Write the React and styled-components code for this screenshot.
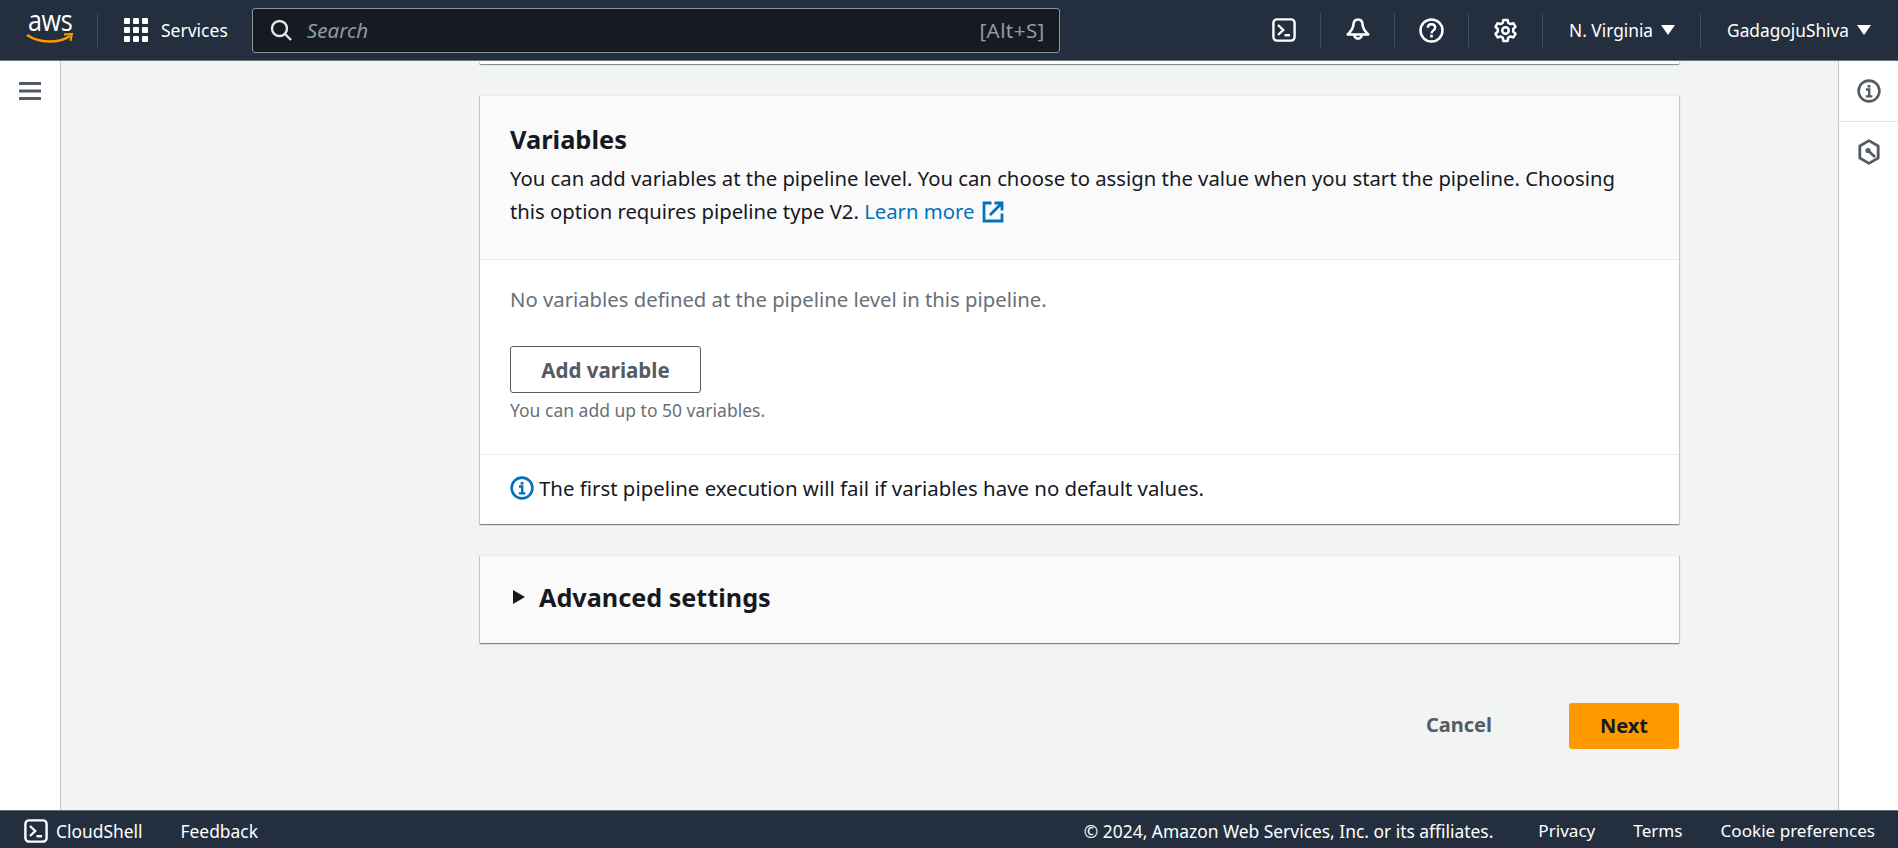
import React from 'react';
import styled, { createGlobalStyle } from 'styled-components';

const GlobalStyle = createGlobalStyle`
  html, body { margin: 0; padding: 0; height: 100%; overflow: hidden; }
  body { font-family: "Noto Sans", "Open Sans", sans-serif; color: #16191f; }
  #root { height: 100%; }
`

// page frame
const Page = styled.div`
  height: 848px;
  display: flex;
  flex-direction: column;
  background: #f2f3f3;
`
const TopBar = styled.header`
  height: 60px;
  flex: none;
  display: flex;
  align-items: center;
  background: #232f3e;
  border-bottom: 1px solid #6b7680;
  color: #fff;
`
const Middle = styled.div`
  flex: 1;
  min-height: 0;
  display: flex;
`
const SideRail = styled.aside`
  width: 61px;
  flex: none;
  background: #fff;
  border-right: 1px solid #c2c7cb;
  display: flex;
  justify-content: center;
  padding-top: 21px;
  box-sizing: border-box;
`
const Main = styled.main`
  flex: 1;
  min-width: 0;
  overflow: hidden;
  padding: 0 159px 0 419px;
`
const ToolRail = styled.aside`
  width: 60px;
  flex: none;
  background: #fff;
  border-left: 1px solid #c2c7cb;
  box-sizing: border-box;
  display: flex;
  flex-direction: column;
`
const ToolSlot = styled.div`
  height: ${p => p.$tall}px;
  display: flex;
  align-items: center;
  justify-content: center;
  border-bottom: ${p => (p.$line ? '1px solid #e2e5e7' : 'none')};
`
const Footer = styled.footer`
  height: 38px;
  flex: none;
  box-sizing: border-box;
  display: flex;
  align-items: center;
  background: #232f3e;
  border-top: 1px solid #5f6b77;
  color: #fff;
  font-size: 17.4px;
  padding: 3px 23px 0 24px;
`

// top bar parts
const Logo = styled.div`
  width: 48px;
  height: 36px;
  margin-left: 26px;
  margin-right: 23px;
  position: relative;
  flex: none;
`
const LogoWord = styled.span`
  position: absolute;
  left: 2px;
  top: -7px;
  font-family: "Open Sans", sans-serif;
  font-size: 30px;
  line-height: 30px;
  letter-spacing: -0.5px;
  color: #fff;
  transform: scaleX(0.84);
  transform-origin: left center;
`
const Smile = styled.svg`
  position: absolute;
  left: 0;
  top: 21px;
`
const Sep = styled.span`
  width: 1px;
  height: 34px;
  background: #414d5c;
  flex: none;
`
const ServicesBtn = styled.div`
  display: flex;
  align-items: center;
  gap: 13px;
  margin-left: 26px;
  margin-right: 24px;
  font-size: 17.5px;
`
const SearchBox = styled.div`
  width: 808px;
  height: 45px;
  flex: none;
  box-sizing: border-box;
  display: flex;
  align-items: center;
  background: #161a22;
  border: 1px solid #8d9499;
  border-radius: 3px;
  padding: 0 14px 0 17px;
`
const SearchHint = styled.span`
  font-style: italic;
  font-size: 20.6px;
  color: #8d9ba3;
  margin-left: 15px;
  flex: 1;
`
const SearchKey = styled.span`
  font-size: 20.6px;
  letter-spacing: 0.4px;
  color: #8d9ba3;
`
const TopActions = styled.div`
  margin-left: auto;
  display: flex;
  align-items: center;
  height: 100%;
`
const IconCell = styled.div`
  width: 73px;
  display: flex;
  justify-content: center;
`
const MenuText = styled.div`
  display: flex;
  align-items: center;
  gap: 8px;
  font-size: 17.3px;
  padding: 0 ${p => p.$right || 25}px 0 26px;
`
const Caret = styled.span`
  width: 0;
  height: 0;
  border-left: 7px solid transparent;
  border-right: 7px solid transparent;
  border-top: 10px solid #fff;
`

// cards
const CutCard = styled.div`
  height: 3px;
  background: #fff;
  box-shadow: 0 1px 1px 0 rgba(0, 28, 36, 0.3), 1px 1px 1px 0 rgba(0, 28, 36, 0.15), -1px 1px 1px 0 rgba(0, 28, 36, 0.15);
  margin-bottom: 31px;
`
const Card = styled.section`
  background: #fff;
  margin-bottom: ${p => p.$gap || 0}px;
  box-shadow: 0 1px 1px 0 rgba(0, 28, 36, 0.3), 1px 1px 1px 0 rgba(0, 28, 36, 0.15), -1px 1px 1px 0 rgba(0, 28, 36, 0.15);
  border-top: 1px solid #eaeded;
`
const CardHead = styled.div`
  background: #fafafa;
  border-bottom: 1px solid #eaeded;
  padding: 26px 30px 20px;
  height: 117px;
`
const CardTitle = styled.h2`
  margin: 0;
  font-size: 25.4px;
  line-height: 34px;
  font-weight: 700;
`
const CardDesc = styled.p`
  margin: 6px 0 0;
  font-size: 20.3px;
  line-height: 33px;
  max-width: 1125px;
`
const LearnLink = styled.a`
  color: #0073bb;
`
const ExternalGlyph = styled.svg`
  margin-left: 8px;
  vertical-align: -4px;
`
const CardBody = styled.div`
  padding: 24px 30px 31px;
  border-bottom: 1px solid #eaeded;
`
const Muted = styled.p`
  margin: 0 0 32px;
  font-size: 20.3px;
  line-height: 30px;
  color: #687078;
`
const OutlineBtn = styled.button`
  display: block;
  width: 191px;
  height: 47px;
  background: #fff;
  border: 1px solid #545b64;
  border-radius: 3px;
  color: #545b64;
  font: 700 20.5px "Noto Sans", sans-serif;
`
const Hint = styled.p`
  margin: 5px 0 0;
  font-size: 17.5px;
  line-height: 25px;
  color: #687078;
`
const CardFoot = styled.div`
  display: flex;
  align-items: center;
  gap: 5px;
  padding: 0 30px 3px;
  box-sizing: border-box;
  height: 69px;
  font-size: 20.4px;
`
const Collapsed = styled.div`
  height: 87px;
  box-sizing: border-box;
  display: flex;
  align-items: center;
  gap: 14px;
  padding: 0 0 5px 33px;
  background: #fafafa;
  font-size: 25.2px;
  font-weight: 700;
`
const Arrow = styled.span`
  width: 0;
  height: 0;
  border-top: 7px solid transparent;
  border-bottom: 7px solid transparent;
  border-left: 12px solid #16191f;
`
const Actions = styled.div`
  display: flex;
  justify-content: flex-end;
  align-items: center;
  gap: 77px;
  margin-top: 60px;
`
const TextBtn = styled.button`
  background: none;
  border: 0;
  padding: 0 0 3px;
  color: #545b64;
  font: 700 20px "Noto Sans", sans-serif;
`
const PrimaryBtn = styled.button`
  width: 110px;
  height: 46px;
  background: #ff9900;
  border: 0;
  border-radius: 3px;
  padding: 0 0 2px;
  color: #16191f;
  font: 700 20px "Noto Sans", sans-serif;
`

// footer parts
const FootShell = styled.div`
  display: flex;
  align-items: center;
  gap: 8px;
  margin-right: 38px;
`
const FootRight = styled.div`
  margin-left: auto;
  display: flex;
  gap: 38px;
`
const Copyright = styled.span`
  margin-right: 7px;
`
const FootLink = styled.span`
  font-size: 17.1px;
`

const ShellIcon = ({ size = 24 }) => (
  <svg width={size} height={size} viewBox="0 0 24 24" fill="none" stroke="#fff" strokeWidth="2.4">
    <rect x="1.4" y="1.4" width="21.2" height="21.2" rx="3.5" />
    <path d="M6 7l5.2 5L6 17" strokeWidth="2.4" />
    <path d="M12.5 17.2H18" strokeWidth="2.4" />
  </svg>
)

const GridIcon = () => (
  <svg width="24" height="24" viewBox="0 0 24 24" fill="#fff">
    {[0, 9, 18].map(y => [0, 9, 18].map(x => (
      <rect key={`${x}-${y}`} x={x} y={y} width="6" height="6" rx="1" />
    )))}
  </svg>
)

const SearchIcon = () => (
  <svg width="22" height="22" viewBox="0 0 22 22" fill="none" stroke="#e4e6e7" strokeWidth="2.4">
    <circle cx="9.5" cy="9.5" r="7.5" />
    <path d="M15 15l6 6" />
  </svg>
)

const BellIcon = () => (
  <svg width="24" height="24" viewBox="0 0 24 24" fill="none" stroke="#fff" strokeWidth="2.6" strokeLinejoin="round">
    <path d="M12 1.5c-3 0-4.4 2.2-4.6 5.2-.2 3.6-1.8 6-5.6 9.8h20.4c-3.8-3.8-5.4-6.2-5.6-9.8C16.4 3.7 15 1.5 12 1.5z" />
    <path d="M8.4 17a3.6 3.6 0 0 0 7.2 0" />
  </svg>
)

const HelpIcon = () => (
  <svg width="25" height="25" viewBox="0 0 25 25" fill="none" stroke="#fff" strokeWidth="2.5">
    <circle cx="12.5" cy="12.5" r="11" />
    <path d="M8.8 9.8c0-2.2 1.6-3.5 3.7-3.5s3.7 1.3 3.7 3.3c0 2.8-3.7 2.7-3.7 5.8" strokeWidth="2.4" />
    <path d="M12.5 16.8v2.7" strokeWidth="2.6" />
  </svg>
)

const GearIcon = () => (
  <svg width="25" height="25" viewBox="0 0 26 26" fill="none" stroke="#fff" strokeWidth="2.6" strokeLinejoin="round">
    <path d="M10.8 2h4.4l.7 3.2 2.2 1.2 3.1-1 2.2 3.8-2.4 2.2v2.8l2.4 2.2-2.2 3.8-3.1-1-2.2 1.2-.7 3.4h-4.4l-.7-3.4-2.2-1.2-3.1 1-2.2-3.8 2.4-2.2v-2.8L2.6 9.2l2.2-3.8 3.1 1 2.2-1.2z" />
    <circle cx="13" cy="13" r="3.4" />
  </svg>
)

const MenuIcon = () => (
  <svg width="22" height="18" viewBox="0 0 22 18" fill="#545b64">
    <rect y="0" width="22" height="3" />
    <rect y="7.5" width="22" height="3" />
    <rect y="15" width="22" height="3" />
  </svg>
)

const InfoIcon = ({ size = 24, color = '#545b64' }) => (
  <svg width={size} height={size} viewBox="0 0 24 24" fill="none" stroke={color} strokeWidth="2.6">
    <circle cx="12" cy="12" r="10.4" />
    <path d="M9 10.5h3.2V17M8.8 17.4h6.6" strokeWidth="2.4" />
    <path d="M10.6 6h2.8v2.6h-2.8z" fill={color} stroke="none" />
  </svg>
)

const HexIcon = () => (
  <svg width="22" height="26" viewBox="0 0 22 26" fill="none" stroke="#545b64" strokeWidth="2.8" strokeLinejoin="round">
    <path d="M11 1.6l9.200 5.400v12L11 24.400 1.800 19V7z" />
    <circle cx="10" cy="11.5" r="2.6" fill="#545b64" stroke="none" />
    <path d="M10 11.5l7 6.5" />
  </svg>
)

const ExternalIcon = () => (
  <ExternalGlyph width="22" height="22" viewBox="0 0 22 22" fill="none" stroke="#0073bb" strokeWidth="2.8">
    <path d="M9.5 2H2v18h18v-7.5" />
    <path d="M8 14L19.5 2.5M12.5 2H20v7.500" />
  </ExternalGlyph>
)

function App() {
  return (
    <Page>
      <GlobalStyle />
      <TopBar>
        <Logo>
          <LogoWord>aws</LogoWord>
          <Smile width="48" height="14" viewBox="0 0 48 14" fill="none">
            <path d="M1 2c12 8 31 9 43 1" stroke="#ff9900" strokeWidth="2.6" />
            <path d="M38 1.5l8-.5-1.6 7" stroke="#ff9900" strokeWidth="2" />
          </Smile>
        </Logo>
        <Sep />
        <ServicesBtn>
          <GridIcon />
          Services
        </ServicesBtn>
        <SearchBox>
          <SearchIcon />
          <SearchHint>Search</SearchHint>
          <SearchKey>[Alt+S]</SearchKey>
        </SearchBox>
        <TopActions>
          <IconCell><ShellIcon /></IconCell>
          <Sep />
          <IconCell><BellIcon /></IconCell>
          <Sep />
          <IconCell><HelpIcon /></IconCell>
          <Sep />
          <IconCell><GearIcon /></IconCell>
          <Sep />
          <MenuText>N. Virginia <Caret /></MenuText>
          <Sep />
          <MenuText $right={27}>GadagojuShiva <Caret /></MenuText>
        </TopActions>
      </TopBar>
      <Middle>
        <SideRail><MenuIcon /></SideRail>
        <Main>
          <CutCard />
          <Card $gap={31}>
            <CardHead>
              <CardTitle>Variables</CardTitle>
              <CardDesc>
                You can add variables at the pipeline level. You can choose to assign the value when you start the pipeline. Choosing this option requires pipeline type V2.{' '}
                <LearnLink>Learn more<ExternalIcon /></LearnLink>
              </CardDesc>
            </CardHead>
            <CardBody>
              <Muted>No variables defined at the pipeline level in this pipeline.</Muted>
              <OutlineBtn>Add variable</OutlineBtn>
              <Hint>You can add up to 50 variables.</Hint>
            </CardBody>
            <CardFoot>
              <InfoIcon color="#0073bb" />
              The first pipeline execution will fail if variables have no default values.
            </CardFoot>
          </Card>
          <Card>
            <Collapsed><Arrow />Advanced settings</Collapsed>
          </Card>
          <Actions>
            <TextBtn>Cancel</TextBtn>
            <PrimaryBtn>Next</PrimaryBtn>
          </Actions>
        </Main>
        <ToolRail>
          <ToolSlot $tall={60} $line><InfoIcon /></ToolSlot>
          <ToolSlot $tall={60}><HexIcon /></ToolSlot>
        </ToolRail>
      </Middle>
      <Footer>
        <FootShell><ShellIcon />CloudShell</FootShell>
        <span>Feedback</span>
        <FootRight>
          <Copyright>© 2024, Amazon Web Services, Inc. or its affiliates.</Copyright>
          <FootLink>Privacy</FootLink>
          <FootLink>Terms</FootLink>
          <FootLink>Cookie preferences</FootLink>
        </FootRight>
      </Footer>
    </Page>
  );
}

export default App;
